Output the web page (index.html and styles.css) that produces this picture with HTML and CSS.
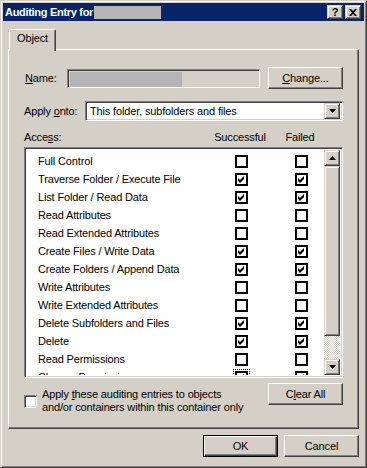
FILE: index.html
```html
<!DOCTYPE html>
<html>
<head>
<meta charset="utf-8">
<link rel="stylesheet" href="styles.css">
</head>
<body>
<div class="window">
  <div class="titlebar">
    <span class="title">Auditing Entry for</span><span class="title-redact"></span>
    <span class="spacer"></span>
    <span class="cbtn raised help">?</span>
    <span class="cbtn raised close"><svg width="8" height="7" viewBox="0 0 8 7"><path d="M0 0h2l2 2 2-2h2L5 3.5 8 7H6L4 5 2 7H0l3-3.5z" fill="#000"/></svg></span>
  </div>
  <div class="client">
    <div class="tabs"><div class="tab">Object</div></div>
    <div class="panel">
      <div class="name-row">
        <span class="lbl lbl-name"><u>N</u>ame:</span>
        <div class="field sunken"><div class="field-redact"></div></div>
        <button class="btn change"><u>C</u>hange...</button>
      </div>
      <div class="apply-row">
        <span class="lbl lbl-apply">Apply <u>o</u>nto:</span>
        <div class="combo sunken">
          <span class="combo-text">This folder, subfolders and files</span>
          <span class="drop raised"><svg width="7" height="4" viewBox="0 0 7 4"><path d="M0 0h7L3.5 4z" fill="#000"/></svg></span>
        </div>
      </div>
      <div class="header">
        <span class="h-access">Acce<u>s</u>s:</span>
        <span class="h-col">Successful</span>
        <span class="h-col">Failed</span>
      </div>
      <div class="listbox sunken">
        <div class="rows">
          <div class="row"><span class="rtext">Full Control</span><span class="cb"></span><span class="cb cb2"></span></div>
          <div class="row"><span class="rtext">Traverse Folder / Execute File</span><span class="cb on"><svg viewBox="0 0 9 9"><path d="M1 3L3 5L7 1V4L3 8L1 6Z"/></svg></span><span class="cb cb2 on"><svg viewBox="0 0 9 9"><path d="M1 3L3 5L7 1V4L3 8L1 6Z"/></svg></span></div>
          <div class="row"><span class="rtext">List Folder / Read Data</span><span class="cb on"><svg viewBox="0 0 9 9"><path d="M1 3L3 5L7 1V4L3 8L1 6Z"/></svg></span><span class="cb cb2 on"><svg viewBox="0 0 9 9"><path d="M1 3L3 5L7 1V4L3 8L1 6Z"/></svg></span></div>
          <div class="row"><span class="rtext">Read Attributes</span><span class="cb"></span><span class="cb cb2"></span></div>
          <div class="row"><span class="rtext">Read Extended Attributes</span><span class="cb"></span><span class="cb cb2"></span></div>
          <div class="row"><span class="rtext">Create Files / Write Data</span><span class="cb on"><svg viewBox="0 0 9 9"><path d="M1 3L3 5L7 1V4L3 8L1 6Z"/></svg></span><span class="cb cb2 on"><svg viewBox="0 0 9 9"><path d="M1 3L3 5L7 1V4L3 8L1 6Z"/></svg></span></div>
          <div class="row"><span class="rtext">Create Folders / Append Data</span><span class="cb on"><svg viewBox="0 0 9 9"><path d="M1 3L3 5L7 1V4L3 8L1 6Z"/></svg></span><span class="cb cb2 on"><svg viewBox="0 0 9 9"><path d="M1 3L3 5L7 1V4L3 8L1 6Z"/></svg></span></div>
          <div class="row"><span class="rtext">Write Attributes</span><span class="cb"></span><span class="cb cb2"></span></div>
          <div class="row"><span class="rtext">Write Extended Attributes</span><span class="cb"></span><span class="cb cb2"></span></div>
          <div class="row"><span class="rtext">Delete Subfolders and Files</span><span class="cb on"><svg viewBox="0 0 9 9"><path d="M1 3L3 5L7 1V4L3 8L1 6Z"/></svg></span><span class="cb cb2 on"><svg viewBox="0 0 9 9"><path d="M1 3L3 5L7 1V4L3 8L1 6Z"/></svg></span></div>
          <div class="row"><span class="rtext">Delete</span><span class="cb on"><svg viewBox="0 0 9 9"><path d="M1 3L3 5L7 1V4L3 8L1 6Z"/></svg></span><span class="cb cb2 on"><svg viewBox="0 0 9 9"><path d="M1 3L3 5L7 1V4L3 8L1 6Z"/></svg></span></div>
          <div class="row"><span class="rtext">Read Permissions</span><span class="cb"></span><span class="cb cb2"></span></div>
          <div class="row"><span class="rtext">Change Permissions</span><span class="cb on focus"><svg viewBox="0 0 9 9"><path d="M1 3L3 5L7 1V4L3 8L1 6Z"/></svg></span><span class="cb cb2 on"><svg viewBox="0 0 9 9"><path d="M1 3L3 5L7 1V4L3 8L1 6Z"/></svg></span></div>
        </div>
        <div class="scrollbar">
          <span class="sbtn raised"><svg width="7" height="4" viewBox="0 0 7 4"><path d="M3.5 0L7 4H0z" fill="#000"/></svg></span>
          <span class="thumb raised"></span>
          <span class="track"></span>
          <span class="sbtn raised"><svg width="7" height="4" viewBox="0 0 7 4"><path d="M0 0h7L3.5 4z" fill="#000"/></svg></span>
        </div>
      </div>
      <div class="bottom-row">
        <div class="apply-check">
          <span class="cb3d sunken"></span>
          <span class="apply-text">Apply <u>t</u>hese auditing entries to objects<br>and/or containers within this container only</span>
        </div>
        <button class="btn">C<u>l</u>ear All</button>
      </div>
    </div>
    <div class="dlg-buttons">
      <button class="btn default">OK</button>
      <button class="btn">Cancel</button>
    </div>
  </div>
</div>
</body>
</html>
```
FILE: styles.css
```css
* { box-sizing: border-box; margin: 0; padding: 0; }
html, body { width: 367px; height: 468px; overflow: hidden; }
body {
  background: #d4d0c8;
  font-family: "Liberation Sans", Arial, sans-serif;
  font-size: 11px;
  letter-spacing: -0.15px;
  color: #000;
}
u { text-decoration: underline; text-underline-offset: 1px; }

.raised {
  border: 1px solid;
  border-color: #d4d0c8 #404040 #404040 #d4d0c8;
  box-shadow: inset 1px 1px #fff, inset -1px -1px #808080;
  background: #d4d0c8;
}
.sunken {
  border: 1px solid;
  border-color: #808080 #fff #fff #808080;
  box-shadow: inset 1px 1px #404040, inset -1px -1px #d4d0c8;
}

.window {
  width: 367px;
  height: 468px;
  border: 1px solid;
  border-color: #d4d0c8 #404040 #404040 #d4d0c8;
  box-shadow: inset 1px 1px #fff, inset -1px -1px #808080;
  padding: 2px;
  display: flex;
  flex-direction: column;
}

.titlebar {
  height: 18px;
  background: #0a246a;
  display: flex;
  align-items: center;
  padding: 0 3px 0 2px;
  flex: none;
}
.title { color: #fff; font-weight: bold; font-size: 11px; letter-spacing: -0.3px; }
.title-redact { width: 67px; height: 13px; background: #b4b4b4; margin-left: 1px; }
.spacer { flex: 1; }
.cbtn {
  width: 16px; height: 14px;
  display: flex; align-items: center; justify-content: center;
  font-weight: bold; font-size: 11px; line-height: 12px;
}
.close { margin-left: 2px; }

.client { flex: 1; padding: 8px 5px 0 5px; display: flex; flex-direction: column; }

.tabs { height: 20px; display: flex; padding-left: 1px; flex: none; }
.tab {
  width: 47px; height: 22px;
  border-top: 1px solid #fff;
  border-left: 1px solid #fff;
  border-right: 1px solid #404040;
  box-shadow: inset -1px 0 #808080;
  border-radius: 2px 2px 0 0;
  background: #d4d0c8;
  position: relative; z-index: 1;
  text-align: center;
  padding-top: 2px;
  line-height: 13px;
}

.panel {
  height: 380px;
  flex: none;
  border: 1px solid;
  border-color: #fff #404040 #404040 #fff;
  box-shadow: inset -1px -1px #808080;
  padding: 17px 15px 0 15px;
}

.name-row { display: flex; align-items: center; height: 22px; }
.lbl-name { width: 43px; padding-left: 1px; }
.field { width: 193px; height: 19px; background: #d4d0c8; padding: 2px; }
.field-redact { width: 112px; height: 15px; background: #b4b4b4; }
.btn {
  font: inherit; color: #000; letter-spacing: inherit;
  width: 75px; height: 22px;
  background: #d4d0c8;
  border: 1px solid;
  border-color: #fff #404040 #404040 #fff;
  box-shadow: inset -1px -1px #808080;
  display: flex; align-items: center; justify-content: center;
}
.change { margin-left: 8px; }
.btn.default {
  border: 1px solid #000;
  box-shadow: inset 1px 1px #fff, inset -1px -1px #404040, inset -2px -2px #808080;
}

.apply-row { display: flex; align-items: center; height: 20px; margin-top: 12px; }
.lbl-apply { width: 61px; }
.combo {
  width: 258px; height: 20px; background: #fff;
  display: flex; align-items: center; padding: 2px;
}
.combo-text { flex: 1; padding-left: 2px; }
.drop { width: 16px; height: 16px; display: flex; align-items: center; justify-content: center; }

.header { display: flex; height: 13px; line-height: 13px; margin-top: 10px; }
.h-access { width: 186px; }
.h-col { width: 60px; text-align: center; }

.listbox {
  margin-top: 3px;
  height: 231px;
  background: #fff;
  display: flex;
  padding: 2px;
}
.rows { flex: 1; overflow: hidden; padding-top: 2px; }
.row { height: 18px; display: flex; align-items: center; padding-left: 11px; }
.rtext { width: 197px; flex: none; white-space: nowrap; }
.cb {
  width: 13px; height: 13px; flex: none;
  border: 2px solid #000; background: #fff;
  display: flex;
}
.cb svg { width: 9px; height: 9px; fill: #000; }
.cb2 { margin-left: 47px; }
.cb.focus { outline: 1px dotted #000; outline-offset: 1px; }

.scrollbar { width: 16px; display: flex; flex-direction: column; flex: none; }
.sbtn { width: 16px; height: 16px; display: flex; align-items: center; justify-content: center; flex: none; }
.thumb { height: 170px; flex: none; }
.track {
  flex: 1;
  background: repeating-conic-gradient(#fff 0 25%, #d4d0c8 0 50%) 0 0 / 2px 2px;
}

.bottom-row { display: flex; justify-content: space-between; align-items: flex-start; margin-top: 5px; }
.apply-check { display: flex; align-items: center; margin-top: 5px; }
.cb3d { width: 13px; height: 13px; background: #fff; flex: none; }
.apply-text { line-height: 13px; margin-left: 5px; }

.dlg-buttons { display: flex; justify-content: flex-end; gap: 6px; margin-top: 6px; }
```
